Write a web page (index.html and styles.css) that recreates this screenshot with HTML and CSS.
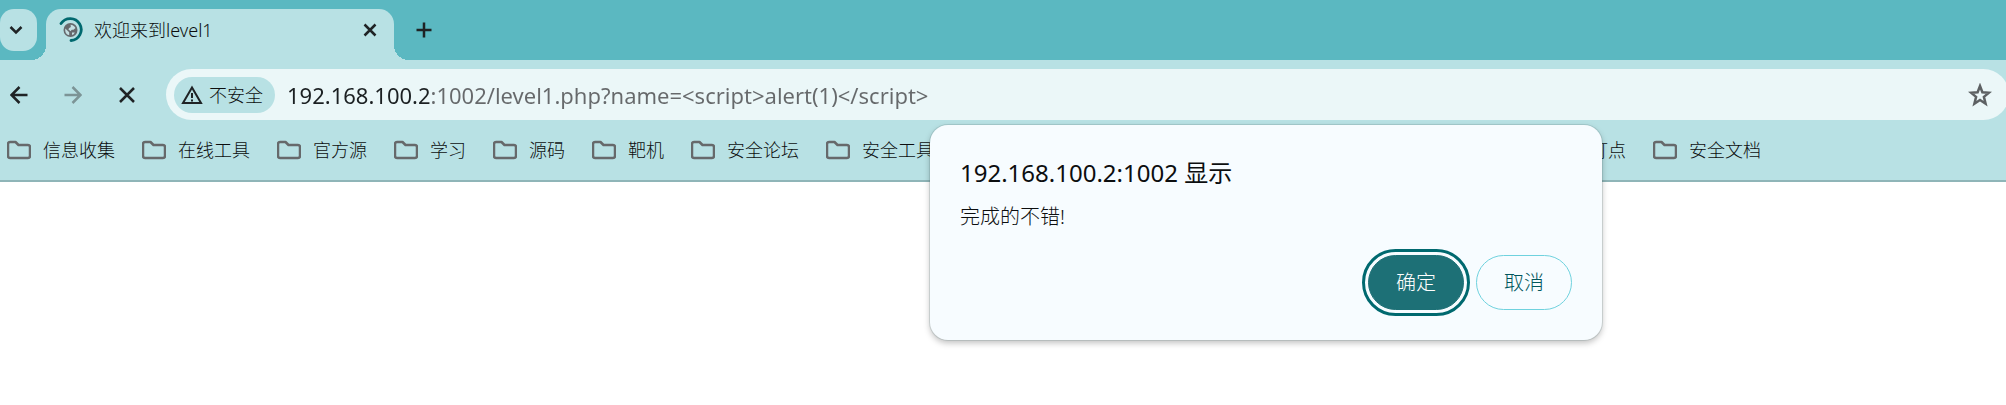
FILE: index.html
```html
<!DOCTYPE html>
<html lang="zh-CN">
<head>
<meta charset="utf-8">
<title>欢迎来到level1</title>
<link rel="stylesheet" href="styles.css">
</head>
<body>
<svg class="defs" aria-hidden="true">
  <symbol id="folder" viewBox="0 0 24 20">
    <path d="M3 2H8.500L11.500 5H21Q23 5 23 7V16Q23 18 21 18H3Q1 18 1 16V4Q1 2 3 2Z" fill="none" stroke="#66696b" stroke-width="2.500" stroke-linejoin="round"/>
  </symbol>
</svg>
<header class="browser">
  <div class="tab-strip">
    <button class="tab-search" aria-label="搜索标签页">
      <svg width="14" height="14" viewBox="0 0 14 14"><path d="M1.500 4L7 9.500L12.500 4"/></svg>
    </button>
    <div class="tab">
      <svg class="favicon" width="24" height="26" viewBox="0 0 24 26">
        <path d="M2 6.500A11 11 0 1 1 12 23.500" fill="none" stroke="#00696f" stroke-width="2.800" stroke-linecap="round"/>
        <circle cx="11.500" cy="13" r="7" fill="#66696d"/>
        <path d="M6.300 11.500L10.200 15.200V18.300Q5.500 17 6.300 11.500ZM11.500 7.800Q15 8 16.500 11L14.500 12.800H12.800L11.500 14.300L9.300 12.300L10.500 10.800Q12.500 10.500 11.500 7.800ZM13 15.500H15.800Q15 17.500 13 18Z" fill="#c4dfe2"/>
      </svg>
      <span class="tab-title">欢迎来到level1</span>
      <button class="icon-button" aria-label="关闭标签页">
        <svg width="14" height="14" viewBox="0 0 14 14"><path d="M1.500 1.500L12.500 12.500M12.500 1.500L1.500 12.500"/></svg>
      </button>
    </div>
    <button class="icon-button new-tab" aria-label="新标签页">
      <svg width="16" height="16" viewBox="0 0 16 16"><path d="M8 0.500V15.500M0.500 8H15.500"/></svg>
    </button>
  </div>
  <div class="toolbar">
    <nav class="nav-buttons">
      <button class="icon-button" aria-label="后退">
        <svg width="18" height="18" viewBox="0 0 18 18"><path d="M17.500 9H2M9.500 1L1.500 9L9.500 17"/></svg>
      </button>
      <button class="icon-button" aria-label="前进" disabled>
        <svg width="18" height="18" viewBox="0 0 18 18"><path d="M0.500 9H16M8.500 1L16.500 9L8.500 17"/></svg>
      </button>
      <button class="icon-button" aria-label="停止加载">
        <svg width="18" height="18" viewBox="0 0 18 18"><path d="M2 2L16 16M16 2L2 16"/></svg>
      </button>
    </nav>
    <div class="omnibox">
      <button class="security">
        <svg width="22" height="20" viewBox="0 0 22 20"><path class="outline" d="M11 2.500L20 18H2Z"/><path class="mark" d="M11 8V13M11 14.500V16.500"/></svg>
        不安全
      </button>
      <input class="url" type="text" aria-label="地址栏" spellcheck="false" value="192.168.100.2:1002/level1.php?name=&lt;script&gt;alert(1)&lt;/script&gt;">
      <button class="icon-button star" aria-label="添加书签">
        <svg width="24" height="24" viewBox="0 0 24 24"><path d="M12 3L14.400 9.200L21 9.700L15.900 13.900L17.600 20.700L12 17L6.400 20.700L8.100 13.900L3 9.700L9.600 9.200Z"/></svg>
      </button>
    </div>
  </div>
  <nav class="bookmarks">
    <button class="bookmark"><svg><use href="#folder"/></svg>信息收集</button>
    <button class="bookmark"><svg><use href="#folder"/></svg>在线工具</button>
    <button class="bookmark"><svg><use href="#folder"/></svg>官方源</button>
    <button class="bookmark"><svg><use href="#folder"/></svg>学习</button>
    <button class="bookmark"><svg><use href="#folder"/></svg>源码</button>
    <button class="bookmark"><svg><use href="#folder"/></svg>靶机</button>
    <button class="bookmark"><svg><use href="#folder"/></svg>安全论坛</button>
    <button class="bookmark"><svg><use href="#folder"/></svg>安全工具</button>
    <button class="bookmark second-group"><svg><use href="#folder"/></svg>打点</button>
    <button class="bookmark"><svg><use href="#folder"/></svg>安全文档</button>
  </nav>
</header>
<section class="dialog" role="alertdialog" aria-labelledby="dialog-title" aria-describedby="dialog-message">
  <h1 class="dialog-title" id="dialog-title">192.168.100.2:1002 显示</h1>
  <p class="dialog-message" id="dialog-message">完成的不错!</p>
  <div class="dialog-actions">
    <button class="action primary">确定</button>
    <button class="action">取消</button>
  </div>
</section>
</body>
</html>
```

FILE: styles.css
```css
* {
  box-sizing: border-box;
}

body {
  margin: 0;
  background: #fff;
  color: #0c0e0f;
  font-family: "Noto Sans", "Noto Sans CJK SC", sans-serif;
  font-size: 18px;
  font-weight: 300;
  line-height: 24px;
  overflow-x: hidden;
}

button,
input {
  margin: 0;
  padding: 0;
  border: 0;
  background: none;
  color: inherit;
  font: inherit;
}

svg {
  display: block;
  flex: none;
}

.defs {
  position: absolute;
  width: 0;
  height: 0;
}

.browser {
  background: #b8e1e4;
  border-bottom: 2px solid #8fb5b8;
}

.tab-strip {
  display: flex;
  height: 60px;
  padding-top: 9px;
  background: #5bb8c1;
}

.tab-search {
  display: flex;
  align-items: center;
  justify-content: flex-end;
  width: 37px;
  height: 42px;
  padding-right: 14px;
  border-radius: 14px;
  background: #b8e1e4;
}

.tab-search path,
.icon-button path,
.security path {
  fill: none;
  stroke: #1f2325;
  stroke-width: 2.500;
}

.security .outline,
.security .mark {
  stroke-width: 2;
}

.tab {
  position: relative;
  display: flex;
  align-items: center;
  width: 348px;
  margin-left: 9px;
  padding: 0 17px 9px 13px;
  border-radius: 15px 15px 0 0;
  background: #b8e1e4;
}

.tab::before,
.tab::after {
  content: "";
  position: absolute;
  bottom: 0;
  width: 15px;
  height: 15px;
}

.tab::before {
  right: 100%;
  background: radial-gradient(circle at 0 0, transparent 15px, #b8e1e4 15px);
}

.tab::after {
  left: 100%;
  background: radial-gradient(circle at 100% 0, transparent 15px, #b8e1e4 15px);
}

.tab-title {
  flex: 1;
  margin-left: 11px;
}

.icon-button {
  display: flex;
  align-items: center;
  justify-content: center;
}

.icon-button:disabled path {
  stroke: #7c9496;
}

.new-tab {
  height: 42px;
  margin-left: 22px;
}

.toolbar {
  display: flex;
  align-items: center;
  padding-top: 9px;
}

.nav-buttons {
  display: flex;
  gap: 36px;
  padding: 0 30px 0 10px;
}

.omnibox {
  display: flex;
  flex: 1;
  align-items: center;
  height: 51px;
  margin-right: -3px;
  padding: 0 17px 0 8px;
  border-radius: 26px;
  background: #ebf7f8;
}

.security {
  display: flex;
  align-items: center;
  gap: 6px;
  height: 36px;
  padding: 0 12px 0 7px;
  border-radius: 18px;
  background: #b8e1e4;
  white-space: nowrap;
}

.url {
  flex: 1;
  min-width: 0;
  margin-left: 12px;
  background: linear-gradient(90deg, #1b2022 144px, #66696b 144px);
  background-clip: text;
  color: transparent;
  font-size: 22px;
  font-weight: 400;
  line-height: 28px;
}

.star path {
  stroke: #5d6163;
}

.bookmarks {
  display: flex;
  align-items: center;
  gap: 27px;
  height: 60px;
  padding-left: 7px;
}

.bookmark {
  display: flex;
  flex: none;
  align-items: center;
  gap: 12px;
}

.bookmark svg {
  width: 24px;
  height: 20px;
}

.second-group {
  margin-left: 593px;
}

.dialog {
  position: absolute;
  top: 125px;
  left: 930px;
  width: 672px;
  padding: 30px;
  border-radius: 18px;
  background: #f7fcff;
  box-shadow: 0 0 0 1px rgba(90, 120, 120, 0.2), 0 3px 6px rgba(0, 0, 0, 0.25);
}

.dialog-title {
  margin: 0;
  font-size: 24px;
  font-weight: 400;
  line-height: 36px;
}

.dialog-message {
  margin: 12px 0 0;
  font-size: 20px;
  line-height: 28px;
}

.dialog-actions {
  display: flex;
  justify-content: flex-end;
  gap: 12px;
  margin-top: 24px;
}

.action {
  width: 96px;
  height: 55px;
  border: 1px solid #6fd2de;
  border-radius: 28px;
  color: #00565c;
  font-size: 20px;
}

.action.primary {
  border-color: #1d7076;
  background: #1d7076;
  color: #fff;
  outline: 3px solid #00696f;
  outline-offset: 3px;
}
```
